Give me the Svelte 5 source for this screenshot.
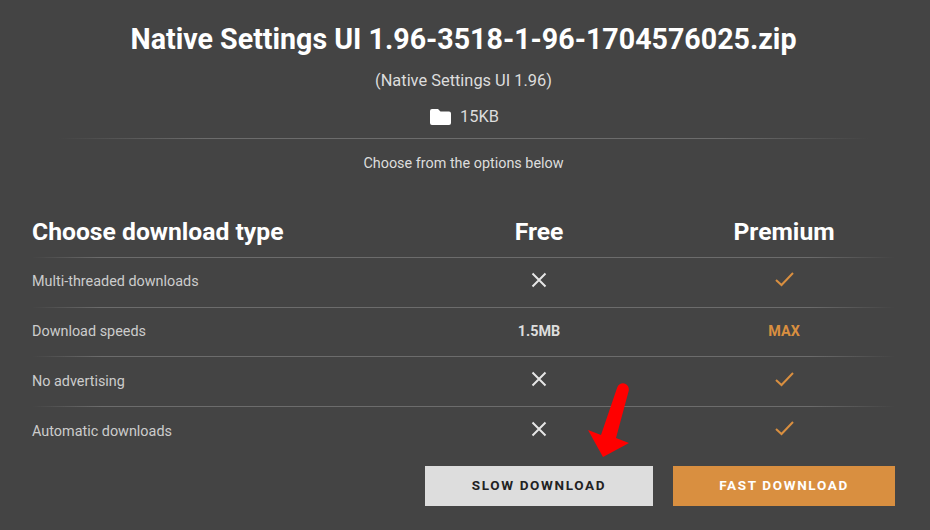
<script>
    const rows = [
        { label: "Multi-threaded downloads", free: "cross", premium: "check" },
        { label: "Download speeds", free: "1.5MB", premium: "MAX" },
        { label: "No advertising", free: "cross", premium: "check" },
        { label: "Automatic downloads", free: "cross", premium: "check" },
    ];
</script>

{#snippet cell(value, cls)}
    <div class={cls}>
        {#if value === "cross"}
            <svg width="16" height="16" viewBox="0 0 16 16" fill="none" stroke="#e6e6e6" stroke-width="2">
                <path d="M1.5 1.5 14.5 14.5M14.5 1.5 1.5 14.5" />
            </svg>
        {:else if value === "check"}
            <svg width="19" height="15" viewBox="0 0 19 15" fill="none" stroke="#d98f40" stroke-width="2">
                <path d="M1 8 6.5 13 18 1" />
            </svg>
        {:else}
            <b>{value}</b>
        {/if}
    </div>
{/snippet}

<main class="page">
    <section class="file">
        <h1>Native Settings UI 1.96-3518-1-96-1704576025.zip</h1>
        <p class="version">(Native Settings UI 1.96)</p>
        <p class="size">
            <svg width="21" height="16" viewBox="0 0 21 16" fill="#fff">
                <path d="M2 0h6l2.500 2.500H19a2 2 0 0 1 2 2V14a2 2 0 0 1-2 2H2a2 2 0 0 1-2-2V2a2 2 0 0 1 2-2z" />
            </svg>
            <span>15KB</span>
        </p>
        <p class="hint">Choose from the options below</p>
    </section>

    <section class="table">
        <div class="row head">
            <div class="label">Choose download type</div>
            <div class="free">Free</div>
            <div class="premium">Premium</div>
        </div>
        {#each rows as row}
            <div class="row">
                <div class="label">{row.label}</div>
                {@render cell(row.free, "free")}
                {@render cell(row.premium, "premium")}
            </div>
        {/each}
    </section>

    <div class="actions">
        <button class="slow">SLOW DOWNLOAD</button>
        <button class="fast">FAST DOWNLOAD</button>
        <svg class="arrow" width="44" height="78" viewBox="0 0 44 78" fill="#f00">
            <path d="M1 48 14 53 30.200 5.500A6 6 0 0 1 41.800 8.500L29 56 42 61 16 75z" />
        </svg>
    </div>
</main>

<style>
    :global(body) {
        background: #444;
    }

    .page {
        box-sizing: border-box;
        width: 930px;
        height: 530px;
        padding: 0 35px 0 32px;
        background: #444;
        color: #ddd;
        font-family: Roboto, "Liberation Sans", sans-serif;
    }

    .file {
        text-align: center;
    }

    h1 {
        margin: 0;
        padding-top: 23px;
        font-size: 28.600px;
        line-height: 33px;
        font-weight: 700;
        color: #fff;
    }

    p {
        margin: 0;
    }

    .version {
        margin-top: 15px;
        font-size: 16.400px;
        line-height: 20px;
    }

    .size {
        display: flex;
        justify-content: center;
        align-items: center;
        gap: 9px;
        margin-top: 16px;
        padding-left: 2px;
        padding-bottom: 11px;
        font-size: 16.400px;
        line-height: 20px;
    }

    .hint {
        padding-top: 17px;
        font-size: 14.400px;
        line-height: 18px;
        background: linear-gradient(90deg, transparent 3%, #6c6c6c 20%, #6c6c6c 80%, transparent 97%) top / 100% 1px no-repeat;
    }

    .table {
        margin-top: 35px;
    }

    .row {
        display: grid;
        grid-template-columns: 414px 186px 1fr;
        align-items: center;
        box-sizing: border-box;
        height: 49.700px;
        padding-bottom: 2px;
        font-size: 14.400px;
        color: #ccc;
        background: linear-gradient(90deg, transparent, #6c6c6c 8%, #6c6c6c 90%, transparent) bottom / 100% 1px no-repeat;
    }

    .row:last-child {
        background: none;
        padding-bottom: 0;
    }

    .row svg {
        margin-bottom: 4px;
    }

    .row:last-child svg {
        margin-bottom: 6px;
    }

    .row.head {
        height: 50px;
        padding-bottom: 4px;
        font-size: 24.700px;
        font-weight: 700;
        color: #fff;
    }

    .free,
    .premium {
        display: flex;
        justify-content: center;
    }

    .premium {
        padding-left: 41px;
    }

    .row b {
        font-size: 14.400px;
        color: #ddd;
    }

    .premium b {
        color: #d98f40;
    }

    .actions {
        position: relative;
        display: flex;
        justify-content: flex-end;
        gap: 20px;
        margin-top: 9px;
    }

    button {
        width: 228px;
        height: 40px;
        padding: 0 0 2px;
        border: none;
        font-family: inherit;
        font-size: 13.500px;
        font-weight: 700;
        letter-spacing: 1.650px;
    }

    .fast {
        width: 222px;
        background: #d98f40;
        color: #fff;
    }

    .slow {
        background: #ddd;
        color: #222;
    }

    .arrow {
        position: absolute;
        left: 555px;
        top: -84px;
    }
</style>
